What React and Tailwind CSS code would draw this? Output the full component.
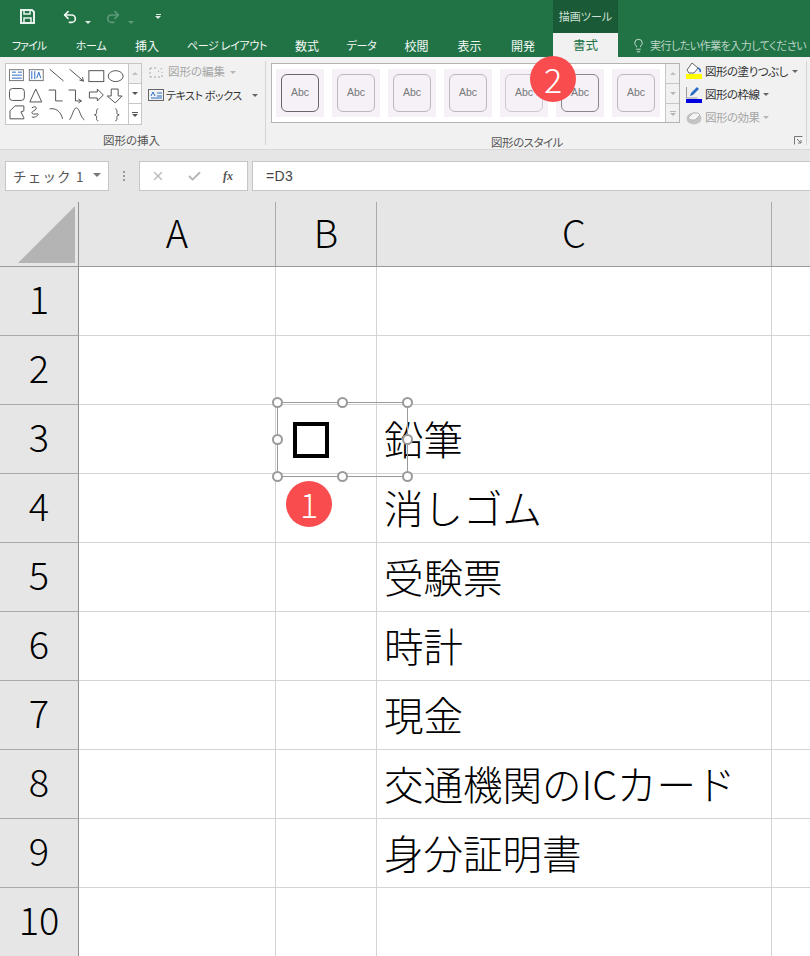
import React from 'react';
import { Lightbulb, Undo2, Redo2, X, Check } from 'lucide-react';

const JP = "font-['Noto_Sans_CJK_JP','Noto_Sans',sans-serif]";
const PALT = "[font-feature-settings:'palt']";

const KANA = 'text-[11px] tracking-[-0.3px]';
const KANJI = 'text-[12px]';

const tabs = [
  ['ファイル', 'w-[58px]', 'text-[11px] tracking-[-0.9px]'],
  ['ホーム', 'w-[66px]', KANA],
  ['挿入', 'w-[46px]', KANJI],
  ['ページ レイアウト', 'w-[114px]', KANA],
  ['数式', 'w-[46px]', KANJI],
  ['データ', 'w-[63px]', KANA],
  ['校閲', 'w-[47px]', KANJI],
  ['表示', 'w-[59px]', KANJI],
  ['開発', 'w-[48px] mr-[6px]', KANJI],
];

const abcStyles = [
  'border-[#6b6470]',
  'border-[#bdb6c0]',
  'border-[#bdb6c0]',
  'border-[#bdb6c0]',
  'border-[#cdc7d0]',
  'border-[#8a8490]',
  'border-[#bdb6c0]',
];

const items = ['', '', '鉛筆', '消しゴム', '受験票', '時計', '現金', '交通機関のICカード', '身分証明書', ''];

function Caret({ className = 'border-t-[#8a8a8a]' }) {
  return <span className={`inline-block w-0 h-0 border-x-[3px] border-x-transparent border-t-[3px] ${className}`} />;
}

// 図形の挿入 palette, all shapes drawn in one sheet
function ShapePalette() {
  return (
    <svg width="123" height="60" viewBox="0 0 123 60" fill="none" stroke="#555" strokeWidth="1">
      <rect x="3.5" y="5.5" width="14" height="11" stroke="#777" />
      <path d="M6 8h4M12 8h4M6 11h10M6 14h10" stroke="#2b6cc4" />
      <rect x="23.5" y="5.5" width="14" height="11" stroke="#777" />
      <path d="M26 7v8M29 7v8M33 8l-2 6M33 8l2 6" stroke="#2b6cc4" />
      <path d="M44 5l14 12" />
      <path d="M64 5l14 12M78 17l-4-1M78 17l-1-4" />
      <rect x="83.5" y="6.5" width="15" height="11" />
      <ellipse cx="110.5" cy="12" rx="7.5" ry="5.5" />
      <rect x="3.5" y="24.5" width="15" height="12" rx="3" />
      <path d="M24 38l6-13 6 13z" />
      <path d="M43 26h7v11h7" />
      <path d="M63 26h7v11h6M76 37l-3-2M76 37l-3 2" />
      <path d="M84 28h8v-3l6 6-6 6v-3h-8z" />
      <path d="M106 25h7v7h4l-7 7-8-7h4z" />
      <path d="M4 47l5-5h9v5l-3 1 3 6v1H4z" />
      <path d="M26 44c5-3 6 1 2 3s-1 4 3 3-1 5-5 3" />
      <path d="M44 45c6-1 11 2 13 10" />
      <path d="M64 56c3-4 4-12 7-12s4 10 8 12" />
      <path d="M93 45c-3 0-1 4-2 5l-2 1 2 1c1 1-1 5 2 5" />
      <path d="M110 45c3 0 1 4 2 5l2 1-2 1c-1 1 1 5-2 5" />
    </svg>
  );
}

function Scroller({ className = '', h1 = 'h-[20px]', muted = false }) {
  const arrow = muted ? 'border-t-[#b5b5b5]' : 'border-t-[#555]';
  return (
    <div className={`flex flex-col border-l border-[#c6c6c6] ${className}`}>
      <div className={`${h1} flex items-center justify-center border-b border-[#c6c6c6] bg-[#f1f1f1]`}>
        <span className="w-0 h-0 border-x-[3px] border-x-transparent border-b-[3px] border-b-[#c0c0c0]" />
      </div>
      <div className={`${h1} flex items-center justify-center border-b border-[#c6c6c6] ${muted ? 'bg-[#f1f1f1]' : 'bg-white'}`}>
        <Caret className={arrow} />
      </div>
      <div className={`flex-1 flex flex-col items-center justify-center gap-[1px] ${muted ? 'bg-[#f1f1f1]' : 'bg-white'}`}>
        <span className={`w-[6px] h-[1px] ${muted ? 'bg-[#b5b5b5]' : 'bg-[#555]'}`} />
        <Caret className={arrow} />
      </div>
    </div>
  );
}

function Ribbon() {
  return (
    <div className={`h-[93px] bg-[#f1f1f1] flex border-b border-[#d8d8d8] ${PALT}`}>
      {/* 図形の挿入 */}
      <div className="w-[266px] border-r border-[#d4d4d4] my-[4px] shrink-0 flex flex-col pl-[5px]">
        <div className="flex mt-[2px]">
          <div className="w-[137px] h-[62px] border border-[#c6c6c6] bg-white flex shrink-0">
            <ShapePalette />
            <Scroller className="w-[13px]" />
          </div>
          <div className="ml-[6px] flex flex-col gap-[5px] whitespace-nowrap">
            <div className="flex items-center gap-[3px] text-[#a6a6a6] h-[18px] text-[11.5px]">
              <svg width="17" height="14" viewBox="0 0 17 14" fill="none" stroke="#a8a8a8" strokeDasharray="2 2"><path d="M2 3h8M2 3v9M2 12h12M14 12V7M14 3l-4 4" /></svg>
              <span>図形の編集</span>
              <Caret className="border-t-[#b5b5b5] ml-[2px]" />
            </div>
            <div className="flex items-center gap-[1px] text-[#333] h-[18px] text-[11px] tracking-[-0.4px]">
              <svg width="17" height="14" viewBox="0 0 17 14" fill="none"><rect x="0.5" y="1.5" width="15" height="11" stroke="#666" /><path d="M3 8l2-4 2 4M9 5h5M9 8h5M3 10h11" stroke="#2b6cc4" /></svg>
              <span>テキスト ボックス</span>
              <Caret className="border-t-[#666] ml-[9px]" />
            </div>
          </div>
        </div>
        <div className="text-center text-[11.5px] text-[#555] mt-[7px] w-[253px]">図形の挿入</div>
      </div>

      {/* 図形のスタイル */}
      <div className="w-[541px] shrink-0 my-[4px] border-r border-[#d4d4d4] flex flex-col pl-[5px] relative">
        <div className="flex mt-[2px]">
          <div className="w-[409px] h-[60px] border border-[#b4b4b4] bg-white flex shrink-0">
            <div className="w-[394px] flex gap-[8px] pl-[4px] pt-[5px]">
              {abcStyles.map((b, i) => (
                <div key={i} className="w-[48px] h-[48px] bg-[#f5f1f7] flex items-center justify-center shrink-0">
                  <div className={`w-[38px] h-[38px] rounded-[6px] border ${b} flex items-center justify-center text-[10.5px] text-[#777] font-['Liberation_Sans',sans-serif]`}>Abc</div>
                </div>
              ))}
            </div>
            <Scroller className="w-[14px]" h1="h-[20px]" muted />
          </div>
          <div className="ml-[6px] flex flex-col gap-[4px] text-[11.5px] tracking-[-0.5px] text-[#333] whitespace-nowrap">
            <div className="flex items-center gap-[3px] h-[19px] -mt-[1px]">
              <svg width="16" height="17" viewBox="0 0 16 17" fill="none" className="-mt-[2px]"><path d="M6 1l6 5-4 5H3L1 8z" fill="#fff" stroke="#666" /><path d="M12 6c2 1 3 2 2 4" stroke="#2b6cc4" strokeWidth="1.5" /><rect y="12" width="16" height="5" fill="#ffff00" /></svg>
              <span>図形の塗りつぶし</span>
              <Caret className="border-t-[#666] ml-[1px]" />
            </div>
            <div className="flex items-center gap-[3px] h-[19px]">
              <svg width="16" height="17" viewBox="0 0 16 17" fill="none"><path d="M.5 1v11h11" stroke="#999" /><path d="M4 10l1-3 6-6 2 2-6 6z" fill="#2b6cc4" /><rect y="13" width="16" height="4" fill="#0000e0" /></svg>
              <span>図形の枠線</span>
              <Caret className="border-t-[#666]" />
            </div>
            <div className="flex items-center gap-[3px] h-[19px] text-[#a6a6a6]">
              <svg width="16" height="14" viewBox="0 0 16 14"><ellipse cx="8" cy="7.5" rx="7.5" ry="6" fill="#c4c4c4" /><path d="M2 7l5-5h5l2 2-5 5H5z" fill="#f4f4f4" stroke="#b5b5b5" /></svg>
              <span>図形の効果</span>
              <Caret className="border-t-[#b5b5b5]" />
            </div>
          </div>
        </div>
        <div className="w-[512px] text-center text-[11.5px] tracking-[-0.5px] text-[#555] mt-[7px]">図形のスタイル</div>
        <svg className="absolute right-[3px] bottom-[0px]" width="9" height="9" viewBox="0 0 9 9" fill="none" stroke="#777"><path d="M.5 8.5v-8h8M3 3l4 4M7 4v3H4" /></svg>
      </div>
    </div>
  );
}

function FormulaBar() {
  return (
    <div className="h-[52px] bg-[#e6e6e6] flex pt-[11px] pl-[5px]">
      <div className="w-[104px] h-[30px] bg-white border border-[#c6c6c6] flex items-center pl-[7px] pr-[7px] justify-between text-[13.5px] tracking-[1.2px] text-[#555] whitespace-nowrap">
        <span>チェック 1</span>
        <span className="w-0 h-0 border-x-[4px] border-x-transparent border-t-[4px] border-t-[#777] -mt-[3px]" />
      </div>
      <div className="w-[30px] flex flex-col items-center justify-center gap-[2px] h-[30px]">
        <span className="w-[2px] h-[2px] bg-[#999]" />
        <span className="w-[2px] h-[2px] bg-[#999]" />
        <span className="w-[2px] h-[2px] bg-[#999]" />
      </div>
      <div className="w-[109px] h-[30px] mr-[4px] bg-white border border-[#c6c6c6] flex items-center">
        <X size={14} color="#b5b5b5" strokeWidth={2} className="ml-[11px]" />
        <Check size={15} color="#b5b5b5" strokeWidth={3} className="ml-[22px]" />
        <span className="ml-[21px] text-[12px] italic font-bold font-['Liberation_Serif',serif] text-[#555]">fx</span>
      </div>
      <div className="flex-1 h-[30px] bg-white border-y border-l border-[#c6c6c6] flex items-center pl-[13px] text-[14px] text-[#444] font-['Liberation_Sans',sans-serif] tracking-[0.4px]">=D3</div>
    </div>
  );
}

function Sheet() {
  const colHead = 'h-[65px] bg-[#e6e6e6] border-r border-b border-r-[#ababab] border-b-[#9a9a9a] flex items-center justify-center text-[38px] font-light pb-[6px]';
  const cell = 'h-[69px] border-r border-b border-[#d4d4d4] bg-white';
  return (
    <div className="relative grid grid-cols-[79px_197px_101px_395px_1fr] text-black">
      <div className="h-[65px] bg-[#e6e6e6] border-r border-b border-r-[#8f8f8f] border-b-[#9a9a9a] flex items-end justify-end pr-[3px] pb-[3px]">
        <span className="w-0 h-0 border-l-[57px] border-l-transparent border-b-[57px] border-b-[#b4b4b4]" />
      </div>
      <div className={colHead}>A</div>
      <div className={colHead}>B</div>
      <div className={colHead}>C</div>
      <div className="h-[65px] bg-[#e6e6e6] border-b border-b-[#9a9a9a]" />
      {items.map((text, i) => (
        <React.Fragment key={i}>
          <div className="h-[69px] bg-[#e6e6e6] border-r border-b border-r-[#8f8f8f] border-b-[#ababab] flex items-center justify-center text-[38px] font-light pb-[8px]">{i + 1}</div>
          <div className={cell} />
          <div className={cell} />
          <div className={`${cell} flex items-center pl-[7px] pb-[2px] text-[39.5px] leading-none whitespace-nowrap font-light`}>{text}</div>
          <div className="h-[69px] border-b border-[#d4d4d4] bg-white" />
        </React.Fragment>
      ))}

      {/* selected check box shape */}
      <div className="absolute left-[277px] top-[200px] w-[131px] h-[75px] border border-[#9a9a9a] flex items-center pl-[15px]">
        <div className="w-[36px] h-[36px] border-[4px] border-black" />
      </div>
      {[
        'left-[272px] top-[195px]', 'left-[337px] top-[195px]', 'left-[402px] top-[195px]',
        'left-[272px] top-[232px]', 'left-[402px] top-[232px]',
        'left-[272px] top-[269px]', 'left-[337px] top-[269px]', 'left-[402px] top-[269px]',
      ].map((pos) => (
        <span key={pos} className={`absolute ${pos} w-[11px] h-[11px] rounded-full border-2 border-[#9a9a9a] bg-white`} />
      ))}
      <span className="absolute left-[286px] top-[279px] w-[46px] h-[46px] rounded-full bg-[#f94c4f] text-white text-[34px] font-light flex items-center justify-center leading-none">1</span>
    </div>
  );
}

export default function App() {
  return (
    <div className={`w-[810px] h-[956px] overflow-hidden relative bg-white ${JP}`}>
      {/* title bar + tabs */}
      <div className={`bg-[#217346] h-[57px] relative ${PALT}`}>
        <div className="h-[33px] flex items-center text-white">
          <svg className="ml-[20px]" width="15" height="15" viewBox="0 0 15 15" fill="none" stroke="#e8f2ec" strokeWidth="2"><path d="M1 1h11l2 2v11H1z" /><path d="M4 1v4h6V1M4 14V9h7v5" strokeWidth="1.5" /></svg>
          <Undo2 size={16} strokeWidth={2.5} className="ml-[27px]" color="#f2f7f4" />
          <span className="ml-[7px]"><Caret className="border-t-[#dfeae4]" /></span>
          <Redo2 size={16} strokeWidth={2.5} className="ml-[14px]" color="#5f9a7a" />
          <span className="ml-[7px]"><Caret className="border-t-[#5f9a7a]" /></span>
          <span className="ml-[21px] flex flex-col items-center gap-[1px]">
            <span className="w-[5px] h-[1px] bg-[#dfeae4]" />
            <Caret className="border-t-[#dfeae4]" />
          </span>
        </div>
        <div className="absolute left-[553px] top-0 w-[65px] h-[33px] bg-[#1a5a37] flex items-center justify-center text-[11px] text-[#cfe0d6] whitespace-nowrap">描画ツール</div>
        <div className="h-[24px] flex items-center text-[#f4f8f6] whitespace-nowrap pt-[1px]">
          {tabs.map(([label, w, type]) => (
            <div key={label} className={`${w} ${type} h-full flex items-center justify-center shrink-0`}>{label}</div>
          ))}
          <div className="w-[65px] h-[24px] -mt-[1px] bg-[#f1f1f1] text-[#217346] text-[12.5px] flex items-center justify-center shrink-0">書式</div>
          <Lightbulb size={15} strokeWidth={1.5} color="#cfe0d6" className="ml-[13px] shrink-0" />
          <span className="ml-[4px] text-[11px] tracking-[-0.5px] text-[#b9d3c4]">実行したい作業を入力してください</span>
        </div>
      </div>

      <Ribbon />
      <FormulaBar />
      <Sheet />

      <span className="absolute left-[530px] top-[56px] w-[46px] h-[46px] rounded-full bg-[#f94c4f] text-white text-[34px] font-light flex items-center justify-center leading-none">2</span>
    </div>
  );
}
